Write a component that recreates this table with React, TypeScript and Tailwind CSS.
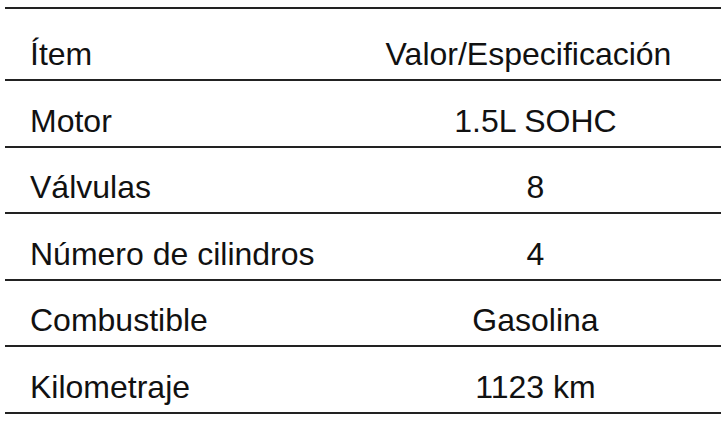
const rows: [string, string][] = [
  ["Motor", "1.5L SOHC"],
  ["Válvulas", "8"],
  ["Número de cilindros", "4"],
  ["Combustible", "Gasolina"],
  ["Kilometraje", "1123 km"],
];

export default function App() {
  return (
    <div className="w-[726px] h-[422px] bg-white pt-[7px] pl-[5px] text-[#111] font-['Liberation_Sans',Arial,sans-serif]">
      <div className="w-[716px]">
        <div className="grid grid-cols-[345px_1fr] h-[74px] border-t-2 border-b-2 border-[#222] text-[32px] leading-none">
          <div className="flex items-end pl-[25px] pb-[9px]">Ítem</div>
          <div className="flex items-end justify-center pb-[9px] pr-[14px]">
            Valor/Especificación
          </div>
        </div>
        {rows.map(([item, value]) => (
          <div
            key={item}
            className="grid grid-cols-[345px_1fr] h-[66.6px] border-b-2 border-[#222] text-[32px] leading-none"
          >
            <div className="flex items-end pl-[25px] pb-[9px]">{item}</div>
            <div className="flex items-end justify-center pb-[9px]">{value}</div>
          </div>
        ))}
      </div>
    </div>
  );
}
